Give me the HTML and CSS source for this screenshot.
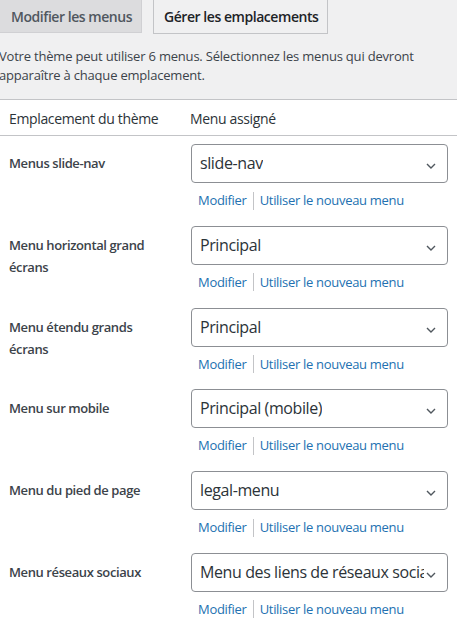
FILE: index.html
```html
<!DOCTYPE html>
<html lang="fr">
<head>
<meta charset="utf-8">
<title>Menus</title>
<link rel="stylesheet" href="styles.css">
</head>
<body>
<div class="wrap">
  <nav class="tabs">
    <span class="tab tab-idle">Modifier les menus</span>
    <span class="tab tab-active">Gérer les emplacements</span>
  </nav>
  <p class="intro">Votre thème peut utiliser 6 menus. Sélectionnez les menus qui devront apparaître à chaque emplacement.</p>
  <div class="table">
    <div class="row head">
      <div class="c1">Emplacement du thème</div>
      <div class="c2">Menu assigné</div>
    </div>
    <div class="row">
      <div class="c1 label">Menus slide-nav</div>
      <div class="c2">
        <div class="select"><span class="val">slide-nav</span><svg class="chev" width="10" height="6" viewBox="0 0 10 6"><path d="M1 1l4 4 4-4" fill="none" stroke="#50575e" stroke-width="1.4"/></svg></div>
        <div class="links"><a>Modifier</a><span class="sep"></span><a>Utiliser le nouveau menu</a></div>
      </div>
    </div>
    <div class="row">
      <div class="c1 label">Menu horizontal grand écrans</div>
      <div class="c2">
        <div class="select"><span class="val">Principal</span><svg class="chev" width="10" height="6" viewBox="0 0 10 6"><path d="M1 1l4 4 4-4" fill="none" stroke="#50575e" stroke-width="1.4"/></svg></div>
        <div class="links"><a>Modifier</a><span class="sep"></span><a>Utiliser le nouveau menu</a></div>
      </div>
    </div>
    <div class="row">
      <div class="c1 label">Menu étendu grands écrans</div>
      <div class="c2">
        <div class="select"><span class="val">Principal</span><svg class="chev" width="10" height="6" viewBox="0 0 10 6"><path d="M1 1l4 4 4-4" fill="none" stroke="#50575e" stroke-width="1.4"/></svg></div>
        <div class="links"><a>Modifier</a><span class="sep"></span><a>Utiliser le nouveau menu</a></div>
      </div>
    </div>
    <div class="row">
      <div class="c1 label">Menu sur mobile</div>
      <div class="c2">
        <div class="select"><span class="val">Principal (mobile)</span><svg class="chev" width="10" height="6" viewBox="0 0 10 6"><path d="M1 1l4 4 4-4" fill="none" stroke="#50575e" stroke-width="1.4"/></svg></div>
        <div class="links"><a>Modifier</a><span class="sep"></span><a>Utiliser le nouveau menu</a></div>
      </div>
    </div>
    <div class="row">
      <div class="c1 label">Menu du pied de page</div>
      <div class="c2">
        <div class="select"><span class="val">legal-menu</span><svg class="chev" width="10" height="6" viewBox="0 0 10 6"><path d="M1 1l4 4 4-4" fill="none" stroke="#50575e" stroke-width="1.4"/></svg></div>
        <div class="links"><a>Modifier</a><span class="sep"></span><a>Utiliser le nouveau menu</a></div>
      </div>
    </div>
    <div class="row last">
      <div class="c1 label">Menu réseaux sociaux</div>
      <div class="c2">
        <div class="select"><span class="val">Menu des liens de réseaux sociaux</span><svg class="chev" width="10" height="6" viewBox="0 0 10 6"><path d="M1 1l4 4 4-4" fill="none" stroke="#50575e" stroke-width="1.4"/></svg></div>
        <div class="links"><a>Modifier</a><span class="sep"></span><a>Utiliser le nouveau menu</a></div>
      </div>
    </div>
  </div>
</div>
</body>
</html>
```
FILE: styles.css
```css
html, body {
  margin: 0;
  padding: 0;
}
body {
  background: #f0f0f1;
  font-family: "Open Sans", "Noto Sans", sans-serif;
  color: #3c434a;
  font-size: 13px;
  overflow: hidden;
}
.wrap {
  width: 457px;
  height: 625px;
  display: flex;
  flex-direction: column;
  overflow: hidden;
}
.tabs {
  display: flex;
  align-items: flex-start;
  gap: 11px;
  margin-left: -1px;
}
.tab {
  display: block;
  box-sizing: border-box;
  height: 34px;
  line-height: 24px;
  padding: 5px 0 5px 11px;
  font-size: 14px;
  font-weight: 600;
  white-space: nowrap;
  border: 1px solid #c3c4c7;
  border-top: none;
  letter-spacing: -0.45px;
}
.tab-idle {
  background: #dcdcde;
  color: #50575e;
  width: 143px;
  border-color: #d0d0d3;
  height: 33px;
}
.tab-active {
  background: #f0f0f1;
  color: #1d2327;
  width: 175px;
  padding-left: 10px;
}
.intro {
  margin: 13px 0 15px -1px;
  line-height: 18.5px;
  letter-spacing: -0.2px;
  color: #3c434a;
}
.table {
  background: #fff;
  border-top: 1px solid #c3c4c7;
  flex: 1;
}
.row {
  display: flex;
  height: 81.8px;
  box-sizing: border-box;
}
.row.last {
  height: 78px;
}
.row.head {
  height: 36px;
  border-bottom: 1px solid #c3c4c7;
  font-size: 14px;
  line-height: 19px;
  color: #2c3338;
  align-items: center;
  letter-spacing: -0.35px;
  padding-top: 1px;
}
.c1 {
  width: 181px;
  box-sizing: border-box;
  padding-left: 9px;
  flex: none;
}
.row.head .c2 {
  padding: 0 0 0 9px;
}
.c2 {
  flex: 1;
  min-width: 0;
  padding: 8px 9px 0 10px;
}
.label {
  font-weight: 600;
  line-height: 22px;
  padding-top: 16px;
  padding-right: 20px;
  color: #3c434a;
  letter-spacing: -0.4px;
}
.select {
  box-sizing: border-box;
  height: 39px;
  border: 1px solid #8c8f94;
  border-radius: 4px;
  background: #fff;
  display: flex;
  align-items: center;
  padding: 0 23px 1px 8px;
  position: relative;
  overflow: hidden;
  white-space: nowrap;
  font-size: 16px;
  color: #2c3338;
  letter-spacing: -0.4px;
}
.val {
  overflow: hidden;
  display: block;
  min-width: 0;
}
.chev {
  position: absolute;
  right: 11px;
  top: 18px;
}
.links {
  display: flex;
  align-items: center;
  margin-top: 8px;
  padding-left: 7px;
  line-height: 19px;
  letter-spacing: -0.3px;
}
.links a {
  color: #2271b1;
}
.sep {
  width: 1px;
  height: 18px;
  background: #c3c4c7;
  margin: 0 6px;
}
```
